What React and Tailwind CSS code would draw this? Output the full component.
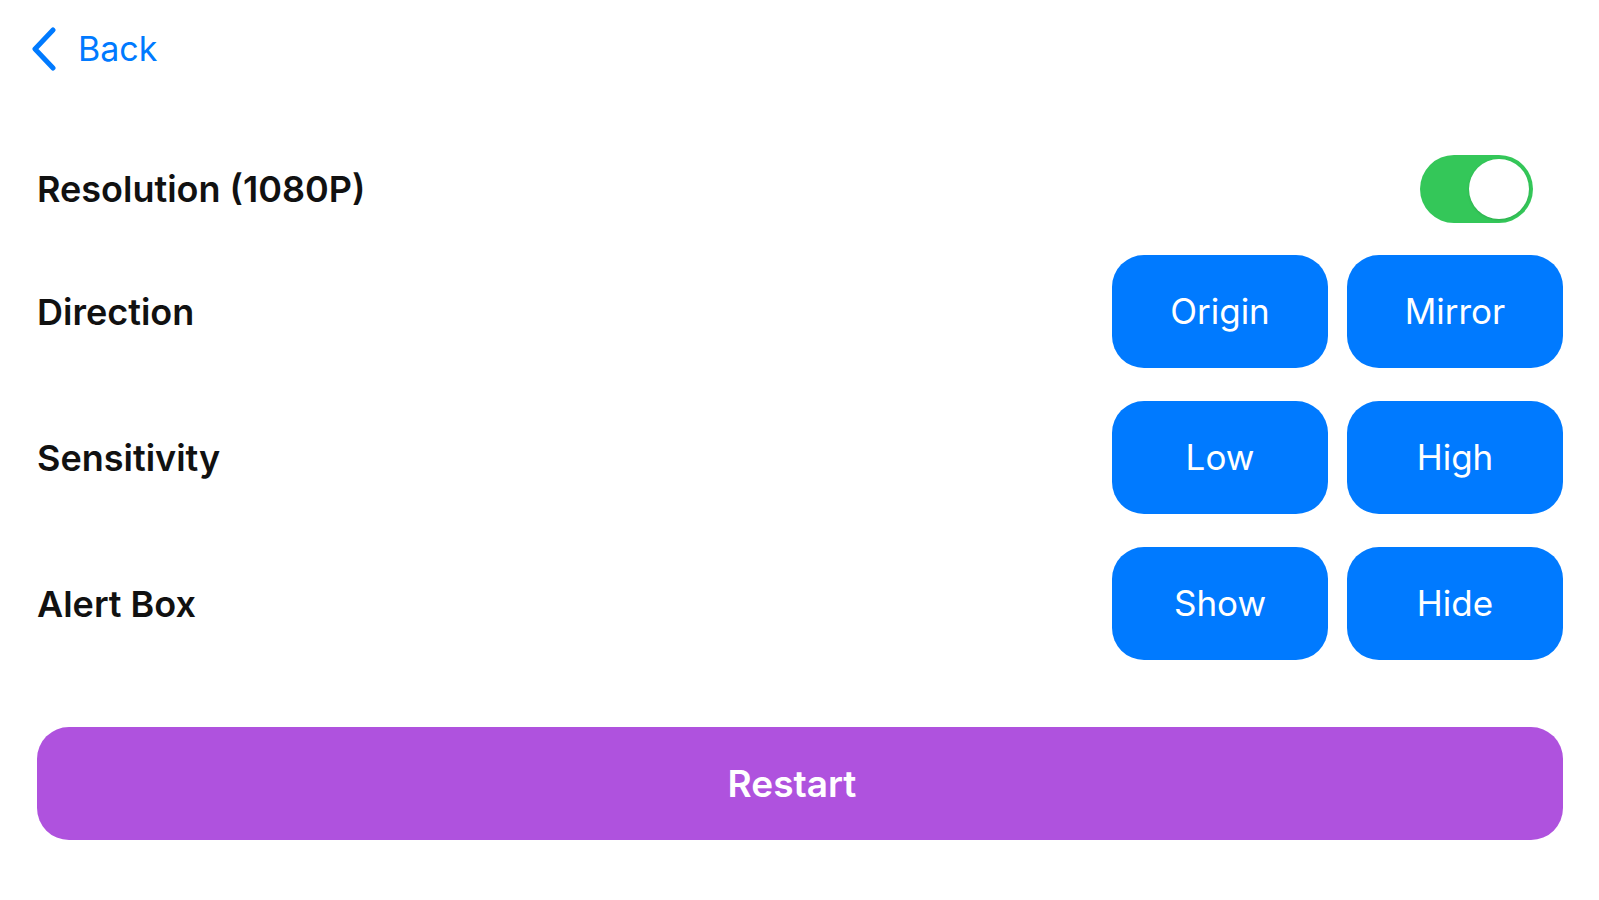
import { useState } from "react";

const font = { fontFamily: "Inter, 'Noto Sans', sans-serif" };

function Choice({ label }) {
  return (
    <button className="w-[216px] h-[113px] rounded-[32px] bg-[#007aff] text-white text-[35px] font-normal flex items-center justify-center">
      {label}
    </button>
  );
}

export default function App() {
  const [on, setOn] = useState(true);

  const rows = [
    { label: "Direction", options: ["Origin", "Mirror"] },
    { label: "Sensitivity", options: ["Low", "High"] },
    { label: "Alert Box", options: ["Show", "Hide"] },
  ];

  return (
    <div className="w-[1599px] h-[900px] bg-white overflow-hidden" style={font}>
      {/* nav */}
      <div className="pl-[31px] pt-[27px] flex items-center gap-[21px] h-[71px] text-[#007aff]">
        <svg width="26" height="44" viewBox="0 0 26 44" fill="none">
          <path d="M22 3 L4 22 L22 41" stroke="#007aff" strokeWidth="5" strokeLinecap="round" strokeLinejoin="round" />
        </svg>
        <span className="text-[34px] leading-none">Back</span>
      </div>

      <div className="pl-[37px] pr-[36px]">
        {/* resolution */}
        <div className="mt-[84px] h-[68px] flex items-center justify-between">
          <span className="text-[36px] font-semibold text-[#111]">Resolution (1080P)</span>
          <button
            onClick={() => setOn(!on)}
            className={`mr-[30px] w-[113px] h-[68px] rounded-full p-[4px] flex items-center ${on ? "bg-[#34c759] justify-end" : "bg-[#e5e5ea] justify-start"}`}
          >
            <span className="w-[60px] h-[60px] rounded-full bg-white shadow-sm" />
          </button>
        </div>

        {/* options */}
        <div className="mt-[32px] flex flex-col gap-[33px]">
          {rows.map((r) => (
            <div key={r.label} className="flex items-center justify-between">
              <span className="text-[36px] font-semibold text-[#111]">{r.label}</span>
              <div className="flex gap-[19px]">
                {r.options.map((o) => (
                  <Choice key={o} label={o} />
                ))}
              </div>
            </div>
          ))}
        </div>

        {/* restart */}
        <button className="mt-[67px] w-full h-[113px] rounded-[32px] bg-[#af52de] text-white text-[37px] font-semibold flex items-center justify-center pr-[16px]">
          Restart
        </button>
      </div>
    </div>
  );
}
